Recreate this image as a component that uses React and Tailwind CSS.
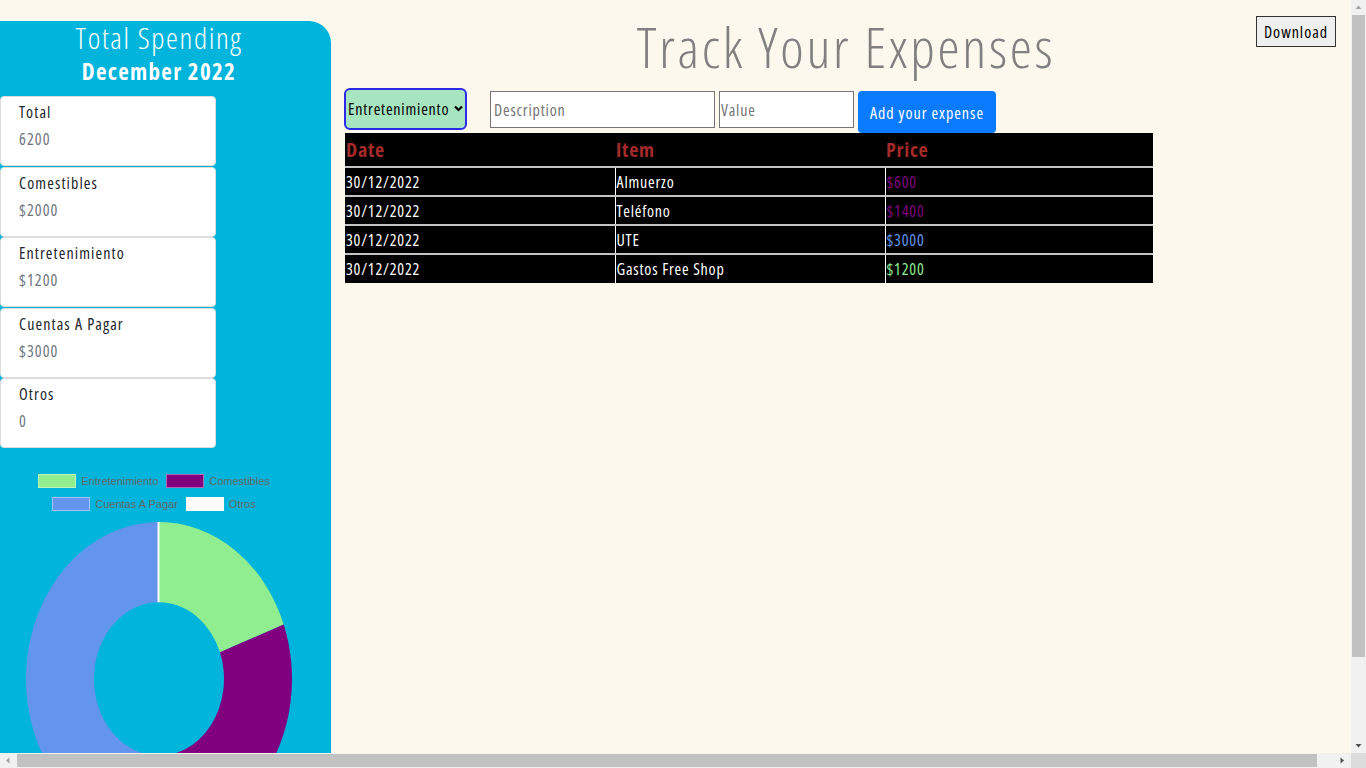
import React from 'react';

// datos del resumen
const cards = [
  { title: 'Total', value: '6200' },
  { title: 'Comestibles', value: '$2000' },
  { title: 'Entretenimiento', value: '$1200' },
  { title: 'Cuentas A Pagar', value: '$3000' },
  { title: 'Otros', value: '0' },
];

const expenses = [
  { date: '30/12/2022', item: 'Almuerzo', price: '$600', color: 'text-[#800080]' },
  { date: '30/12/2022', item: 'Teléfono', price: '$1400', color: 'text-[#800080]' },
  { date: '30/12/2022', item: 'UTE', price: '$3000', color: 'text-[#6495ed]' },
  { date: '30/12/2022', item: 'Gastos Free Shop', price: '$1200', color: 'text-[#90ee90]' },
];

const slices = [
  { label: 'Entretenimiento', value: 1200, color: '#90ee90' },
  { label: 'Comestibles', value: 2000, color: '#800080' },
  { label: 'Cuentas A Pagar', value: 3000, color: '#6495ed' },
  { label: 'Otros', value: 0, color: '#ffffff' },
];

const polar = (r, a) => [r * Math.sin(a), -r * Math.cos(a)];

const arcPath = (a0, a1, ro, ri) => {
  const large = a1 - a0 > Math.PI ? 1 : 0;
  const [x0, y0] = polar(ro, a0);
  const [x1, y1] = polar(ro, a1);
  const [x2, y2] = polar(ri, a1);
  const [x3, y3] = polar(ri, a0);
  return `M${x0} ${y0} A${ro} ${ro} 0 ${large} 1 ${x1} ${y1} L${x2} ${y2} A${ri} ${ri} 0 ${large} 0 ${x3} ${y3} Z`;
};

const Donut = () => {
  const total = slices.reduce((s, x) => s + x.value, 0);
  let angle = 0;
  const paths = slices
    .filter((s) => s.value > 0)
    .map((s) => {
      const a0 = angle;
      angle += (s.value / total) * Math.PI * 2;
      return <path key={s.label} d={arcPath(a0, angle, 133, 65)} fill={s.color} />;
    });
  return (
    <svg viewBox="-133 -133 266 266" width="266" height="314" preserveAspectRatio="none" className="block ml-[26px] mt-[11px]">
      {paths}
      <line x1="-0.5" y1="-133" x2="-0.5" y2="-65" stroke="#ffffff" strokeWidth="2" />
    </svg>
  );
};

const LegendItem = ({ label, color }) => (
  <div className="flex items-center gap-[5px]">
    <span className="w-[38px] h-[14px] border border-white/40" style={{ backgroundColor: color }} />
    <span className="text-[11px] leading-[14px] tracking-normal text-[#666666] font-['Liberation_Sans',Arial,sans-serif] [font-stretch:100%]">{label}</span>
  </div>
);

const Sidebar = () => (
  <aside className="w-[331px] shrink-0 mt-[21px] bg-[#00b4dc] rounded-tr-[22px] pb-[10px]">
    <div className="w-[318px] text-center text-white">
      <h2 className="text-[30px] leading-[34px] font-light tracking-[1.6px]">Total Spending</h2>
      <h3 className="text-[23px] leading-[32px] font-bold tracking-[1.3px]">December 2022</h3>
    </div>

    <div className="mt-[9px] w-[216px] flex flex-col gap-[0.5px] tracking-[1.1px]">
      {cards.map((c) => (
        <div key={c.title} className="h-[70px] bg-white border border-[#dcdcdc] rounded-[4px] pl-[18px] pt-[4px]">
          <div className="text-[16px] leading-[22px] font-medium text-[#212529]">{c.title}</div>
          <div className="mt-[5px] text-[16px] leading-[22px] text-[#6c757d]">{c.value}</div>
        </div>
      ))}
    </div>

    <div className="w-[308px] mt-[26px] flex flex-col items-center gap-[9px]">
      <div className="flex gap-[8px]">
        <LegendItem label="Entretenimiento" color="#90ee90" />
        <LegendItem label="Comestibles" color="#800080" />
      </div>
      <div className="flex gap-[8px]">
        <LegendItem label="Cuentas A Pagar" color="#6495ed" />
        <LegendItem label="Otros" color="#ffffff" />
      </div>
    </div>

    <Donut />
  </aside>
);

const ExpenseForm = () => (
  <div className="flex items-start h-[45px]">
    <div className="relative w-[123px] h-[42px]">
      <select className="appearance-none w-full h-full bg-[#a6e5bf] border-2 border-[#2a2ae8] rounded-[6px] pl-[2px] text-[16px] tracking-[0.8px] text-black outline-none [font-stretch:75%]">
        <option>Entretenimiento</option>
        <option>Comestibles</option>
        <option>Cuentas A Pagar</option>
        <option>Otros</option>
      </select>
      <svg className="absolute right-[4px] top-[17px] pointer-events-none" width="9" height="7" viewBox="0 0 9 7">
        <path d="M1 1.5 L4.5 5 L8 1.5" fill="none" stroke="#000" strokeWidth="2.2" />
      </svg>
    </div>
    <input
      placeholder="Description"
      className="ml-[23px] mt-[3px] w-[225px] h-[37px] bg-white border border-[#767676] px-[3px] text-[16px] tracking-[0.8px] placeholder:text-[#757575] outline-none [font-stretch:75%]"
    />
    <input
      placeholder="Value"
      className="ml-[4px] mt-[3px] w-[135px] h-[37px] bg-white border border-[#767676] px-[1px] text-[16px] tracking-[0.8px] placeholder:text-[#757575] outline-none [font-stretch:75%]"
    />
    <button className="ml-[4px] mt-[3px] w-[138px] h-[42px] bg-[#0a7bff] text-white text-[16px] tracking-[1px] rounded-[4px] pt-[2px] [font-stretch:75%]">
      Add your expense
    </button>
  </div>
);

const ExpenseTable = () => (
  <table className="w-[808px] ml-[1px] border-collapse bg-black text-white table-fixed">
    <thead>
      <tr className="h-[34px]">
        <th className="w-[270px] text-left font-bold text-[20px] tracking-[0.75px] text-[#a52a2a] px-[1px]">Date</th>
        <th className="w-[270px] text-left font-bold text-[20px] tracking-[0.75px] text-[#a52a2a] px-[1px]">Item</th>
        <th className="text-left font-bold text-[20px] tracking-[0.75px] text-[#a52a2a] px-[1px]">Price</th>
      </tr>
    </thead>
    <tbody className="tracking-[0.8px]">
      {expenses.map((e, i) => (
        <tr key={i} className="h-[29px] border-t-2 border-[#c4c4c4]">
          <td className="px-[1px] text-[16px]">{e.date}</td>
          <td className="px-[1px] text-[16px] border-l border-white">{e.item}</td>
          <td className={`px-[1px] text-[16px] border-l border-white ${e.color}`}>{e.price}</td>
        </tr>
      ))}
    </tbody>
  </table>
);

// barras de desplazamiento del navegador (capturadas en la imagen)
const Scrollbars = () => (
  <>
    <div className="fixed top-0 right-0 w-[15px] h-[753px] bg-[#f1f1f1] flex flex-col items-center">
      <svg width="15" height="15" viewBox="0 0 15 15"><path d="M4.5 9 L7.5 5.5 L10.5 9 Z" fill="#a3a3a3" /></svg>
      <div className="w-[13px] h-[642px] bg-[#c1c1c1]" />
      <div className="flex-1" />
      <svg width="15" height="15" viewBox="0 0 15 15"><path d="M4.5 6 L7.5 9.5 L10.5 6 Z" fill="#505050" /></svg>
    </div>
    <div className="fixed bottom-0 left-0 w-[1351px] h-[15px] bg-[#f1f1f1] flex items-center">
      <svg width="17" height="15" viewBox="0 0 17 15"><path d="M9.5 4.5 L6 7.5 L9.5 10.5 Z" fill="#a3a3a3" /></svg>
      <div className="w-[1300px] h-[13px] bg-[#c1c1c1]" />
      <div className="flex-1" />
      <svg width="17" height="15" viewBox="0 0 17 15"><path d="M6.5 4.5 L10 7.5 L6.5 10.5 Z" fill="#505050" /></svg>
    </div>
    <div className="fixed bottom-0 right-0 w-[15px] h-[15px] bg-[#dcdcdc]" />
  </>
);

export default function App() {
  return (
    <div className="w-full min-h-screen flex bg-[#fdf8ee] font-['Open_Sans',sans-serif] [font-stretch:75%]">
      <Sidebar />
      <main className="flex-1 pl-[13px]">
        <header className="grid grid-cols-[1fr_auto_1fr] items-start h-[88px] mr-[18px]">
          <div />
          <h1 className="text-[56px] leading-[74px] font-light tracking-[2.7px] text-[#808080] mt-[9px]">Track Your Expenses</h1>
          <div className="flex justify-end pr-[12px] pt-[16px]">
            <button className="w-[80px] h-[31px] border border-[#333] bg-[#efefef] text-[16px] tracking-[1px] text-black [font-stretch:75%]">
              Download
            </button>
          </div>
        </header>
        <ExpenseForm />
        <ExpenseTable />
      </main>
      <Scrollbars />
    </div>
  );
}
